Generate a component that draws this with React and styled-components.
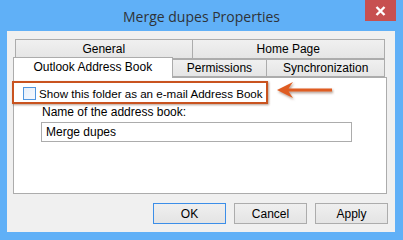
import React from 'react';
import styled, { createGlobalStyle } from 'styled-components';

const GlobalStyle = createGlobalStyle`
  html, body {
    margin: 0;
    padding: 0;
    background: #ffffff;
  }
  body {
    font-family: "Liberation Sans", Arial, sans-serif;
  }
`;

const Window = styled.div`
  width: 403px;
  height: 240px;
  background: #60b0f7;
  display: flex;
  flex-direction: column;
  box-sizing: border-box;
`;

const TitleBar = styled.div`
  height: 31px;
  display: grid;
  grid-template-columns: 1fr auto 1fr;
  flex-shrink: 0;
`;

const Title = styled.div`
  grid-column: 2;
  align-self: center;
  font-family: "Open Sans", "Liberation Sans", sans-serif;
  font-size: 14px;
  color: #2f3338;
  padding-top: 1px;
`;

const CloseButton = styled.div`
  grid-column: 3;
  justify-self: end;
  align-self: start;
  width: 31px;
  height: 21px;
  margin-right: 7px;
  background: #c75050;
  display: flex;
  align-items: center;
  justify-content: center;
`;

const Client = styled.div`
  flex: 1;
  margin: 0 8px 8px 7px;
  padding: 8px 8px 8px 6px;
  background: #f0f0f0;
  display: flex;
  flex-direction: column;
`;

const TabRow = styled.div`
  display: flex;
  align-items: flex-end;
  height: ${(p) => p.height}px;
  margin-left: ${(p) => p.indent || 0}px;
  width: ${(p) => p.width}px;
`;

const Tab = styled.div`
  box-sizing: border-box;
  width: ${(p) => p.width}px;
  height: ${(p) => (p.active ? 21 : p.tall || 20)}px;
  margin-left: ${(p) => (p.first ? 0 : -1)}px;
  margin-top: ${(p) => (p.active ? -3 : 0)}px;
  margin-bottom: ${(p) => (p.active ? -1 : 0)}px;
  position: relative;
  z-index: ${(p) => (p.active ? 2 : 1)};
  border: 1px solid #acacac;
  border-bottom: ${(p) => (p.active ? 'none' : '1px solid #acacac')};
  background: ${(p) => (p.active ? '#ffffff' : 'linear-gradient(#f0f0f0, #e5e5e5)')};
  display: flex;
  align-items: ${(p) => (p.active ? 'flex-start' : 'center')};
  justify-content: center;
  padding-top: ${(p) => (p.active ? 2 : 0)}px;
  font-size: 12px;
  color: #000;
  white-space: nowrap;
`;

const Panel = styled.div`
  flex: 1;
  border: 1px solid #acacac;
  background: #ffffff;
  padding: 9px 0 0 9px;
  position: relative;
  z-index: 1;
`;

const CheckRow = styled.div`
  display: flex;
  align-items: center;
  height: 13px;
  position: relative;

  &::before {
    content: '';
    position: absolute;
    left: -11px;
    top: -6px;
    width: 252px;
    height: 19px;
    border: 2px solid #c9531f;
    box-shadow: 1px 1px 2px rgba(90, 40, 10, 0.45);
    pointer-events: none;
  }
`;

const CheckBox = styled.div`
  box-sizing: border-box;
  width: 13px;
  height: 13px;
  border: 1px solid #4f96df;
  background: linear-gradient(135deg, #e6effa, #f6f9fe);
  flex-shrink: 0;
`;

const CheckLabel = styled.span`
  margin-left: 3px;
  font-size: 11.6px;
  color: #000;
  white-space: nowrap;
`;

const Arrow = styled.svg`
  position: absolute;
  left: 251px;
  top: -8px;
  overflow: visible;
`;

const FieldGroup = styled.div`
  padding-left: 18px;
  margin-top: 5px;
  display: flex;
  flex-direction: column;
`;

const FieldLabel = styled.div`
  font-size: 12px;
  color: #000;
  height: 15px;
  line-height: 15px;
  padding-left: 1px;
`;

const TextBox = styled.div`
  box-sizing: border-box;
  margin-top: 2px;
  width: 311px;
  height: 20px;
  border: 1px solid #acacac;
  background: #fff;
  padding-left: 4px;
  font-size: 12px;
  line-height: 18px;
  color: #000;
`;

const ButtonRow = styled.div`
  display: flex;
  justify-content: flex-end;
  gap: 8px;
  margin-top: 9px;
  margin-right: -1px;
`;

const Button = styled.div`
  box-sizing: border-box;
  width: 73px;
  height: 21px;
  border: 1px solid ${(p) => (p.primary ? '#3c8ee8' : '#acacac')};
  background: linear-gradient(#efefef, #e4e4e4);
  display: flex;
  align-items: center;
  justify-content: center;
  font-size: 12px;
  color: #000;
`;

const App = () => (
  <>
    <GlobalStyle />
    <Window>
      <TitleBar>
        <Title>Merge dupes Properties</Title>
        <CloseButton>
          <svg width="11" height="10" viewBox="0 0 11 10">
            <path d="M1.5 1 L9.5 9 M9.5 1 L1.5 9" stroke="#fff" strokeWidth="2.4" />
          </svg>
        </CloseButton>
      </TitleBar>
      <Client>
        <TabRow height={20} indent={2} width={370}>
          <Tab first width={178}>General</Tab>
          <Tab width={194}>Home Page</Tab>
        </TabRow>
        <TabRow height={18} width={372}>
          <Tab first active width={160}>Outlook Address Book</Tab>
          <Tab width={96} tall={18}>Permissions</Tab>
          <Tab width={119} tall={18}>Synchronization</Tab>
        </TabRow>
        <Panel>
          <CheckRow>
            <CheckBox />
            <CheckLabel>Show this folder as an e-mail Address Book</CheckLabel>
            <Arrow width="60" height="22" viewBox="0 0 60 22">
              <defs>
                <filter id="arrowShadow" x="-20%" y="-40%" width="150%" height="200%">
                  <feDropShadow dx="1" dy="1.5" stdDeviation="1" floodColor="#5a2a10" floodOpacity="0.5" />
                </filter>
              </defs>
              <path
                d="M3 11 L19 3 L14.5 9.5 L58 9.5 L58 12.5 L14.5 12.5 L19 19 Z"
                fill="#df5c20"
                filter="url(#arrowShadow)"
              />
            </Arrow>
          </CheckRow>
          <FieldGroup>
            <FieldLabel>Name of the address book:</FieldLabel>
            <TextBox>Merge dupes</TextBox>
          </FieldGroup>
        </Panel>
        <ButtonRow>
          <Button primary>OK</Button>
          <Button>Cancel</Button>
          <Button>Apply</Button>
        </ButtonRow>
      </Client>
    </Window>
  </>
);

export default App;
